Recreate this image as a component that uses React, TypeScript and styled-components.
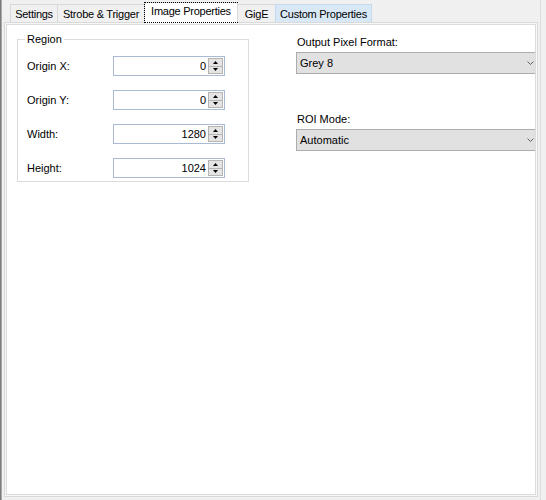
import React from "react";
import styled, { createGlobalStyle } from "styled-components";

const GlobalStyle = createGlobalStyle`
  html, body {
    margin: 0;
    padding: 0;
  }
  body {
    background: #f0f0f0;
    font-family: "Liberation Sans", Arial, sans-serif;
    font-size: 11px;
    color: #000;
  }
`;

const Window = styled.div`
  width: 546px;
  height: 500px;
  display: flex;
  overflow: hidden;
  background: #f0f0f0;
`;

const Splitter = styled.div`
  width: 1px;
  border-right: 1px solid #a8a8a8;
  background: #7c7c7c;
`;

const Host = styled.div`
  width: 536px;
  padding-left: 2px;
  border-right: 1px solid #dcdcdc;
  display: flex;
  flex-direction: column;
`;

// tabs
const TabStrip = styled.div`
  height: 22px;
  display: flex;
  align-items: flex-end;
  padding-left: 6px;
  position: relative;
  z-index: 1;
`;

const Tab = styled.div<{ $w: number; $active?: boolean; $hover?: boolean }>`
  box-sizing: border-box;
  width: ${(p) => p.$w}px;
  height: ${(p) => (p.$active ? 21 : 18)}px;
  margin-bottom: ${(p) => (p.$active ? -1 : 0)}px;
  margin-left: -1px;
  border: 1px solid ${(p) => (p.$hover ? "#c5d9ec" : "#d9d9d9")};
  border-bottom: none;
  background: ${(p) => (p.$active ? "#fff" : p.$hover ? "#d9e8f6" : "#f0f0f0")};
  display: flex;
  align-items: ${(p) => (p.$active ? "flex-start" : "center")};
  justify-content: center;
  padding-top: ${(p) => (p.$active ? 2 : 0)}px;
  white-space: nowrap;
  letter-spacing: -0.25px;
  outline: ${(p) => (p.$active ? "1px dotted #000" : "none")};
  outline-offset: -1px;
  &:first-child {
    margin-left: 0;
  }
`;

const Panel = styled.div`
  box-sizing: border-box;
  width: 534px;
  height: 475px;
  border: 1px solid #d9d9d9;
  padding: 1px;
  background: #f7f7f7;
`;

const PanelBody = styled.div`
  box-sizing: border-box;
  height: 100%;
  border: 1px solid #dcdcdc;
  background: #fff;
  overflow: hidden;
  display: flex;
  align-items: flex-start;
`;

// region group
const GroupBox = styled.fieldset`
  box-sizing: border-box;
  flex-shrink: 0;
  width: 232px;
  margin: 8px 0 0 10px;
  padding: 10px 9px 3px 9px;
  border: 1px solid #dcdcdc;
  min-width: 0;
`;

const Legend = styled.legend`
  padding: 0 2px;
  margin-left: -2px;
  line-height: 13px;
`;

const FieldGrid = styled.div`
  display: grid;
  grid-template-columns: 86px 112px;
  grid-auto-rows: 20px;
  row-gap: 14px;
  align-items: center;
`;

const Label = styled.span`
  line-height: 13px;
`;

const NumericBox = styled.div`
  box-sizing: border-box;
  height: 20px;
  border: 1px solid #a9bad4;
  display: flex;
  align-items: center;
  padding: 1px;
`;

const NumericValue = styled.span`
  flex: 1;
  text-align: right;
  padding-right: 2px;
`;

const Spinner = styled.div`
  width: 15px;
  height: 16px;
  display: flex;
  flex-direction: column;
`;

const SpinButton = styled.div`
  flex: 1;
  box-sizing: border-box;
  border: 1px solid #b4b4b4;
  background: #e4e4e4;
  display: flex;
  align-items: center;
  justify-content: center;
  & + & {
    border-top: none;
  }
`;

// right column
const SideColumn = styled.div`
  flex-shrink: 0;
  margin-left: 47px;
  padding-top: 11px;
  display: flex;
  flex-direction: column;
`;

const FieldLabel = styled.div<{ $gap?: number }>`
  line-height: 13px;
  margin-top: ${(p) => p.$gap || 0}px;
  margin-left: 1px;
`;

const Combo = styled.div`
  box-sizing: border-box;
  width: 241px;
  height: 22px;
  margin-top: 3px;
  border: 1px solid #adadad;
  background: #e1e1e1;
  display: flex;
  align-items: center;
  justify-content: space-between;
  padding: 0 2px 0 3px;
`;

const Arrow = ({ up }: { up?: boolean }) => (
  <svg width="5" height="3" viewBox="0 0 5 3">
    <path d={up ? "M2.5 0 L5 3 L0 3 Z" : "M0 0 L5 0 L2.5 3 Z"} fill="#000" />
  </svg>
);

const Chevron = () => (
  <svg width="7" height="4" viewBox="0 0 7 4">
    <path d="M0.5 0.5 L3.5 3.5 L6.5 0.5" fill="none" stroke="#606060" strokeWidth="1" />
  </svg>
);

const NumericField = ({ label, value }: { label: string; value: number }) => (
  <>
    <Label>{label}</Label>
    <NumericBox>
      <NumericValue>{value}</NumericValue>
      <Spinner>
        <SpinButton>
          <Arrow up />
        </SpinButton>
        <SpinButton>
          <Arrow />
        </SpinButton>
      </Spinner>
    </NumericBox>
  </>
);

const tabs = [
  { name: "Settings", w: 48 },
  { name: "Strobe & Trigger", w: 88 },
  { name: "Image Properties", w: 94, active: true },
  { name: "GigE", w: 39 },
  { name: "Custom Properties", w: 97, hover: true },
];

const App: React.FC = () => {
  return (
    <Window>
      <GlobalStyle />
      <Splitter />
      <Host>
        <TabStrip>
          {tabs.map((t) => (
            <Tab key={t.name} $w={t.w} $active={t.active} $hover={t.hover}>
              {t.name}
            </Tab>
          ))}
        </TabStrip>
        <Panel>
          <PanelBody>
            <GroupBox>
              <Legend>Region</Legend>
              <FieldGrid>
                <NumericField label="Origin X:" value={0} />
                <NumericField label="Origin Y:" value={0} />
                <NumericField label="Width:" value={1280} />
                <NumericField label="Height:" value={1024} />
              </FieldGrid>
            </GroupBox>
            <SideColumn>
              <FieldLabel>Output Pixel Format:</FieldLabel>
              <Combo>
                Grey 8
                <Chevron />
              </Combo>
              <FieldLabel $gap={39}>ROI Mode:</FieldLabel>
              <Combo>
                Automatic
                <Chevron />
              </Combo>
            </SideColumn>
          </PanelBody>
        </Panel>
      </Host>
    </Window>
  );
};

export default App;
